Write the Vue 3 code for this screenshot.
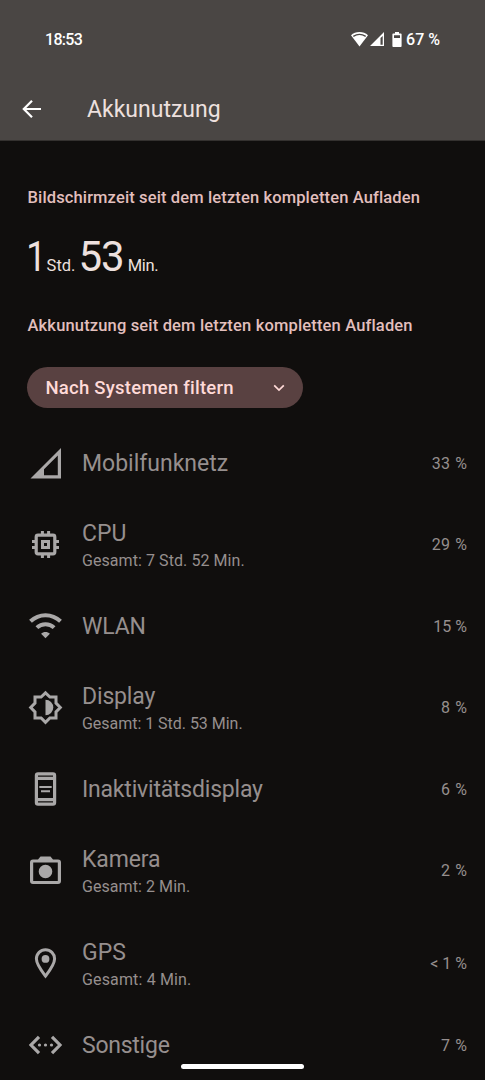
<script setup>
const rows = [
  { icon: 'cell', name: 'Mobilfunknetz', pct: '33 %' },
  { icon: 'cpu', name: 'CPU', total: 'Gesamt: 7 Std. 52 Min.', pct: '29 %' },
  { icon: 'wifi', name: 'WLAN', pct: '15 %' },
  { icon: 'display', name: 'Display', total: 'Gesamt: 1 Std. 53 Min.', pct: '8 %' },
  { icon: 'ambient', name: 'Inaktivitätsdisplay', pct: '6 %' },
  { icon: 'camera', name: 'Kamera', total: 'Gesamt: 2 Min.', pct: '2 %' },
  { icon: 'gps', name: 'GPS', total: 'Gesamt: 4 Min.', pct: '< 1 %' },
  { icon: 'other', name: 'Sonstige', pct: '7 %' },
]
</script>

<template>
  <div class="screen">
    <header class="top">
      <div class="status">
        <span class="clock">18:53</span>
        <div class="status-right">
          <svg class="s-wifi" viewBox="0 0 17 15"><path d="M8.5 0C5.2 0 2.300 1.200 0 3.200L8.500 14.600 17 3.200C14.700 1.200 11.800 0 8.500 0Z" fill="#fff" /><path d="M2.300 4.400C6 1.900 11 1.900 14.700 4.400" fill="none" stroke="#4a4644" stroke-width="1.300" /></svg>
          <svg class="s-cell" viewBox="0 0 14 14"><path d="M14 0V14H0ZM12.700 4L10.500 6V12.700H12.700Z" fill="#fff" fill-rule="evenodd" /></svg>
          <svg class="s-batt" viewBox="0 0 10 15"><path d="M3 0H7V1.500H8.800Q9.600 1.500 9.600 2.300V14.100Q9.600 15 8.800 15H1.200Q.400 15 .400 14.100V2.300Q.400 1.500 1.200 1.500H3ZM2 3.200V6H8V3.200Z" fill="#fff" fill-rule="evenodd" /></svg>
          <span class="level">67 %</span>
        </div>
      </div>
      <div class="bar">
        <svg class="back" viewBox="0 0 20 20"><path d="M19 10H2.500M10 1.800L1.800 10 10 18.200" /></svg>
        <h1>Akkunutzung</h1>
      </div>
    </header>

    <main>
      <h2 class="first">Bildschirmzeit seit dem letzten kompletten Aufladen</h2>
      <p class="time"><b class="hours">1</b><span class="std">Std.</span><b class="mins">53</b><span class="min">Min.</span></p>
      <h2 class="second">Akkunutzung seit dem letzten kompletten Aufladen</h2>
      <button class="filter">
        <span>Nach Systemen filtern</span>
        <svg viewBox="0 0 12 8"><path d="M1.200 1.300L6 6.100 10.800 1.300" /></svg>
      </button>

      <ul>
        <li v-for="r in rows" :key="r.name" :class="[r.icon, { tall: r.total }]">
          <svg class="icon" :viewBox="r.total ? '-0.5 0.5 36 36' : '-0.5 0 36 36'">
            <path v-if="r.icon === 'cell'" fill-rule="evenodd" d="M33.500 3V33.500H3ZM30.300 10.500L16.500 24.300V30.300H30.300Z" />
            <g v-else-if="r.icon === 'cpu'" fill="none" stroke="#aaa8a8">
              <rect x="8.700" y="8.700" width="18.600" height="18.600" rx="1.800" stroke-width="3.200" />
              <rect x="15" y="15" width="6" height="6" stroke-width="3" />
              <path d="M14.900 4.500V8M21.100 4.500V8M14.900 28V31.500M21.100 28V31.500M4.500 14.900H8M4.500 21.100H8M28 14.900H31.500M28 21.100H31.500" stroke-width="3" />
            </g>
            <g v-else-if="r.icon === 'wifi'">
              <path d="M3 13.300C11.500 5.100 24.500 5.100 33 13.300M9.400 19.600C14.200 15 21.800 15 26.600 19.600" fill="none" stroke="#aaa8a8" stroke-width="4" />
              <path d="M18 30.200L13.600 25.800C15.800 23.500 20.200 23.500 22.400 25.800Z" />
            </g>
            <g v-else-if="r.icon === 'display'">
              <path d="M18 3.400L22.400 7.500H28.500V13.600L32.800 18 28.500 22.400V28.500H22.400L18 32.800 13.600 28.500H7.500V22.400L3.200 18 7.500 13.600V7.500H13.600Z" fill="none" stroke="#aaa8a8" stroke-width="3" />
              <path d="M18 10.200A7.800 7.800 0 0 1 18 25.800Z" />
            </g>
            <g v-else-if="r.icon === 'ambient'">
              <path fill-rule="evenodd" d="M10.500 1.300H25.500Q28.700 1.300 28.700 4.500V31.500Q28.700 34.700 25.500 34.700H10.500Q7.300 34.700 7.300 31.500V4.500Q7.300 1.300 10.500 1.300ZM10.500 4.400V5.800H25.500V4.400ZM10.500 9V27H25.500V9ZM10.500 30.200V31.600H25.500V30.200Z" />
              <path d="M11.800 15H24.200V17H11.800ZM13.500 19.300H22.500V21.300H13.500Z" />
            </g>
            <path v-else-if="r.icon === 'camera'" fill-rule="evenodd" d="M5.500 7H10.500L13 4H23L25.500 7H30.500Q33.500 7 33.500 10V28.400Q33.500 31.400 30.500 31.400H5.500Q2.500 31.400 2.500 28.400V10Q2.500 7 5.500 7ZM5.700 10V28.400H30.300V10ZM18 12.200A6.800 6.800 0 1 1 18 25.800A6.800 6.800 0 1 1 18 12.200Z" />
            <g v-else-if="r.icon === 'gps'">
              <path d="M18 30.600C14.500 26 8.900 19 8.900 13.300A9.100 9.100 0 0 1 27.100 13.300C27.100 19 21.500 26 18 30.600Z" fill="none" stroke="#aaa8a8" stroke-width="3" />
              <circle cx="18" cy="13.400" r="3.900" />
            </g>
            <g v-else>
              <path d="M11.500 9.800L3.500 18 11.500 26.200M24.500 9.800L32.500 18 24.500 26.200" fill="none" stroke="#aaa8a8" stroke-width="3.200" />
              <circle cx="12" cy="18" r="1.600" /><circle cx="18" cy="18" r="1.600" /><circle cx="24" cy="18" r="1.600" />
            </g>
          </svg>
          <div class="label">
            <div class="name">{{ r.name }}</div>
            <div v-if="r.total" class="total">{{ r.total }}</div>
          </div>
          <span class="pct">{{ r.pct }}</span>
        </li>
      </ul>
    </main>
    <div class="handle"></div>
  </div>
</template>

<style>
body { margin: 0; background: #100e0d; }
</style>

<style scoped>
.screen { position: relative; width: 485px; height: 1080px; overflow: hidden; background: #100e0d; font-family: Roboto, "Noto Sans", sans-serif; }
h1, h2, p, ul { margin: 0; padding: 0; font-weight: 400; }
.top { height: 141px; background: #4a4644; color: #fff; box-sizing: border-box; border-bottom: 1px solid #34312f; }
.status { display: flex; justify-content: space-between; align-items: center; height: 78px; padding: 0 45px; font-size: 16px; font-weight: 500; }
.clock { letter-spacing: -.7px; }
.status-right { display: flex; align-items: center; }
.s-wifi { width: 17px; height: 15px; margin-right: 2px; }
.s-cell { width: 14px; height: 14px; margin-right: 8px; }
.s-batt { width: 10px; height: 15px; margin-right: 4px; }
.bar { display: flex; align-items: center; height: 62px; padding-left: 22px; }
.back { width: 20px; height: 20px; fill: none; stroke: #fff; stroke-width: 2.200; }
h1 { margin-left: 45px; font-size: 23px; color: #ede0de; }
h2 { margin-left: 27.500px; font-size: 16.500px; line-height: 20px; font-weight: 500; letter-spacing: .13px; color: #e2bfbd; white-space: nowrap; }
.second { letter-spacing: .16px; }
.first { padding-top: 47px; }
.time { display: flex; align-items: baseline; height: 52px; margin: 23px 0 33px 27px; line-height: 52px; color: #ede0de; white-space: nowrap; }
.time b { font-size: 42px; font-weight: 400; letter-spacing: -1px; }
.time span { font-size: 16.500px; }
.time .hours { margin-left: -1px; transform: scaleX(.84); transform-origin: 2px 50%; }
.std { margin: 0 3px 0 -2px; }
.min { margin-left: 4px; letter-spacing: -.3px; }
.filter { display: flex; align-items: center; justify-content: space-between; width: 275.500px; height: 41px; margin: 31px 0 0 27px; padding: 0 18px 0 18.500px; border: 0; border-radius: 21px; background: #594141; color: #ffdad8; font: 500 18.500px Roboto, sans-serif; letter-spacing: .24px; white-space: nowrap; }
.filter svg { width: 12px; height: 8px; fill: none; stroke: #ffdad8; stroke-width: 1.700; }
ul { margin-top: 20px; list-style: none; }
li { display: flex; align-items: center; box-sizing: border-box; height: 70px; padding: 0 18px 0 27px; color: #968f8e; }
li.tall { height: 93px; }
.icon { width: 36px; height: 36px; fill: #aaa8a8; flex: none; }
.label { flex: 1; margin-left: 19px; padding-top: 2px; }
.name { font-size: 23px; line-height: 30px; }
.total { margin-top: .500px; font-size: 16px; line-height: 24px; }
.tall .label { padding-top: 3px; }
.wifi .name, .display .name, .camera .name { letter-spacing: -.15px; }
.ambient .name { letter-spacing: -.2px; }
.other .name { letter-spacing: -.25px; }
.cpu .total, .camera .total { letter-spacing: .07px; }
.gps .total { letter-spacing: .15px; }
.display .total { letter-spacing: -.03px; }
.pct { font-size: 16px; word-spacing: 1px; letter-spacing: .2px; margin-right: -.2px; }
.wifi .pct, .gps .pct { word-spacing: 0; letter-spacing: 0; margin-right: 0; }
.handle { position: absolute; left: 181px; top: 1064px; width: 123px; height: 5px; border-radius: 3px; background: #fff; }
</style>
